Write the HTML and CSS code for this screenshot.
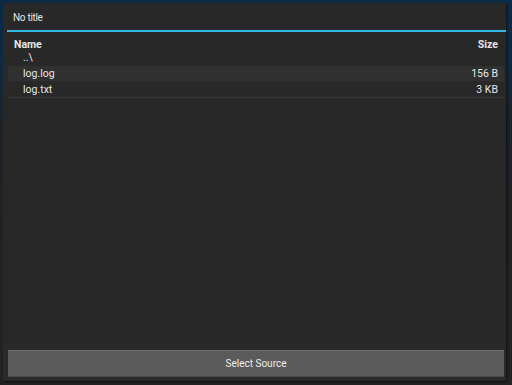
FILE: index.html
```html
<!DOCTYPE html>
<html lang="en">
<head>
    <meta charset="UTF-8">
    <title>Select Source</title>
    <link rel="stylesheet" href="styles.css">
</head>
<body>
<div class="dialog">
    <div class="title"><span>No title</span></div>
    <div class="files">
        <div class="row head">
            <span class="name">Name</span>
            <span class="size">Size</span>
        </div>
        <div class="row up"><span class="name">..\</span></div>
        <div class="row alt"><span class="name">log.log</span><span class="size">156 B</span></div>
        <div class="row"><span class="name">log.txt</span><span class="size">3 KB</span></div>
    </div>
    <div class="footer">
        <button class="button">Select Source</button>
    </div>
</div>
</body>
</html>
```

FILE: styles.css
```css
html, body{
    margin: 0;
    height: 100%;
}
body{
    background: linear-gradient(#0d2b46 0, #0f2a42 60px, #1e2328 120px, #232323 100%);
    font-family: Roboto, "Noto Sans", sans-serif;
    font-size: 10px;
    color: #e6e6e6;
    overflow: hidden;
}
.dialog{
    display: flex;
    flex-direction: column;
    margin: 3px 6px 0 3px;
    height: 378px;
    background: #282828;
    box-shadow: 1px 1px 2px rgba(0,0,0,.6);
}
.title{
    height: 26px;
    margin-left: 4px;
    padding-left: 6px;
    border-bottom: 2px solid #33b5e5;
    display: flex;
    align-items: center;
    padding-top: 1px;
    letter-spacing: -0.3px;
}
.files{
    padding: 6px 2px 0 5px;
    font-size: 10.5px;
}
.row{
    display: flex;
    justify-content: space-between;
    height: 15px;
    line-height: 15px;
    padding: 0 6px 0 15px;
}
.row.head{
    padding-left: 6px;
    font-weight: bold;
    height: 14px;
    line-height: 14px;
}
.row.up{
    height: 14px;
    line-height: 12px;
}
.row.alt{
    background: #303030;
    height: 15px;
    border-bottom: 1px solid #2b2b2b;
}
.row:last-child{
    border-bottom: 1px solid #353535;
}
.footer{
    margin-top: auto;
    padding: 3px 2px 4px 5px;
    background: #2a2a2a;
}
.button{
    display: block;
    width: 100%;
    height: 27px;
    background: #5b5b5b;
    border: 0;
    border-top: 1px solid #6e6e6e;
    border-bottom: 1px solid #4a4a4a;
    color: #ececec;
    font: 10px Roboto, "Noto Sans", sans-serif;
    padding: 0;
}
```
